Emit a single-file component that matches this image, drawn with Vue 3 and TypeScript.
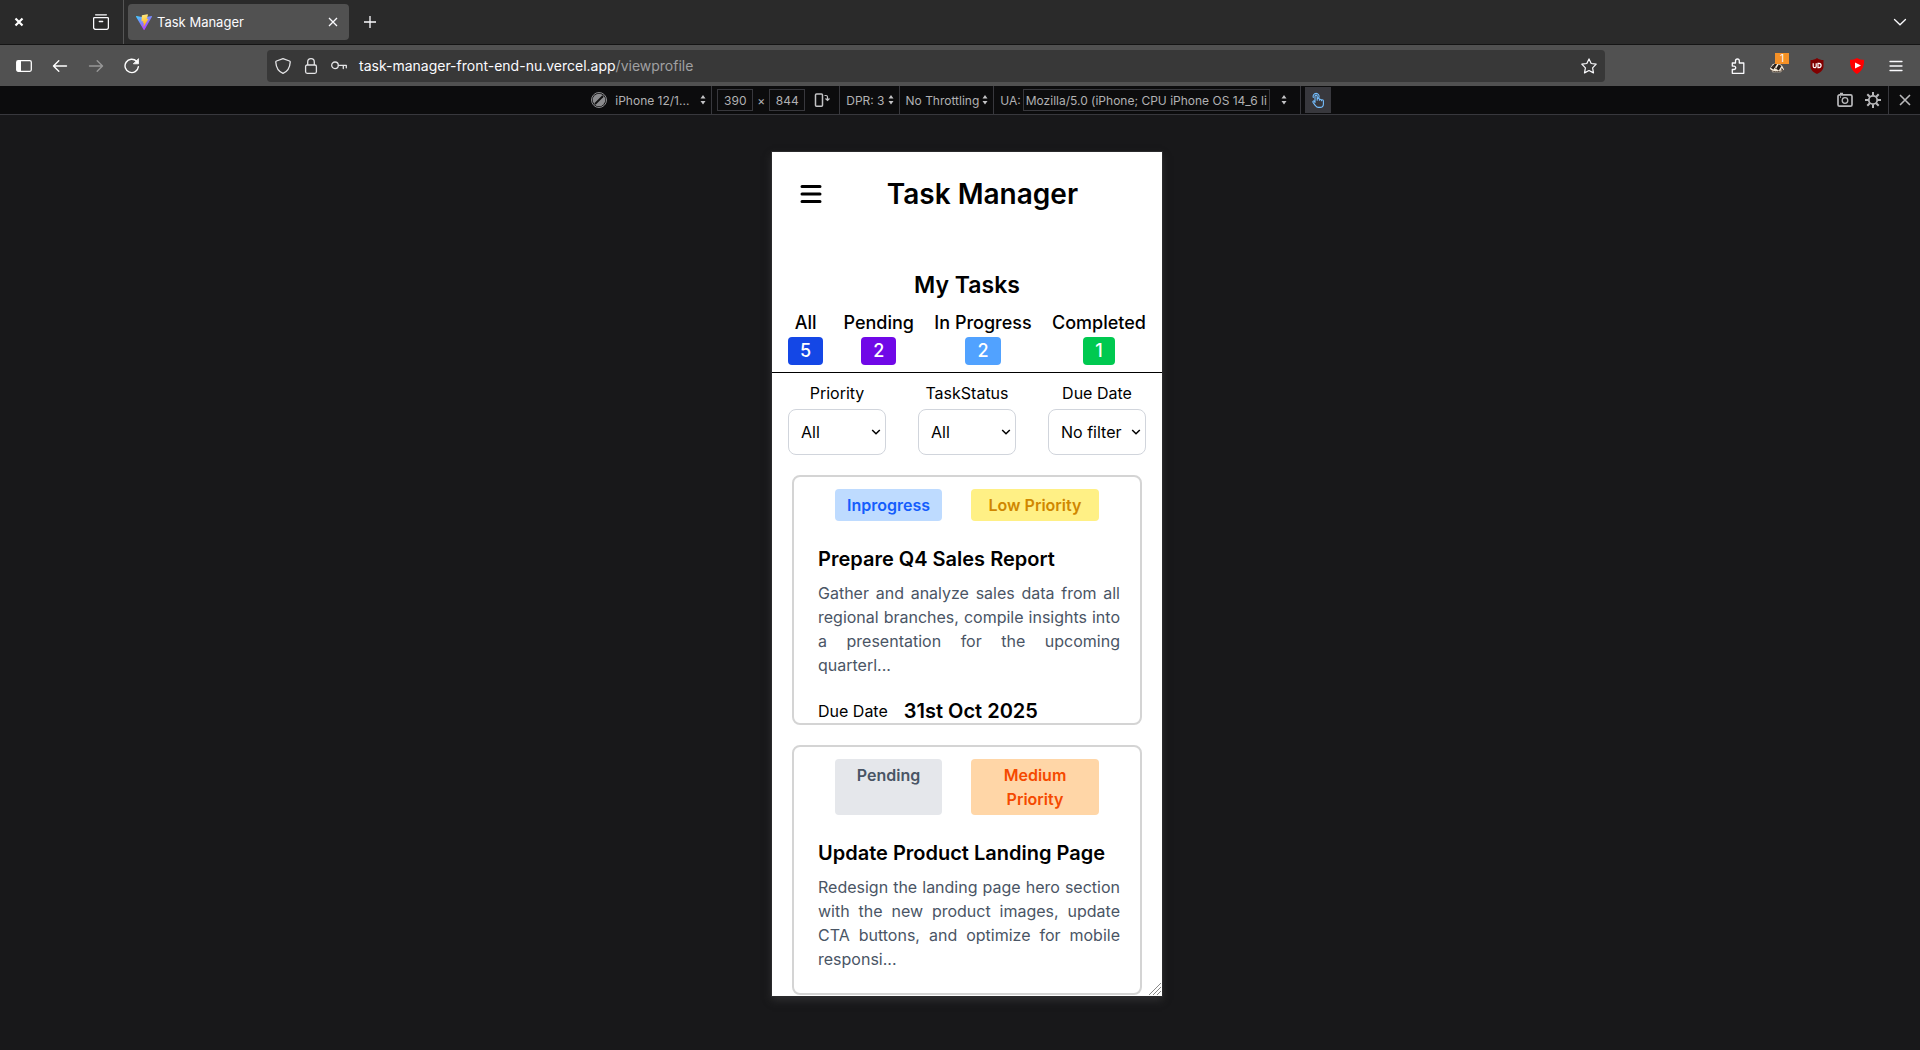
<script setup lang="ts">
interface Task {
  id: number
  status: string
  statusClass: string
  priority: string
  priorityClass: string
  title: string
  text: string
  due: string
}

interface Counter {
  label: string
  count: number
  tone: string
}

interface Filter {
  id: string
  label: string
  options: string[]
}

const counters: Counter[] = [
  { label: 'All', count: 5, tone: 'blue' },
  { label: 'Pending', count: 2, tone: 'violet' },
  { label: 'In Progress', count: 2, tone: 'sky' },
  { label: 'Completed', count: 1, tone: 'green' },
]

const filters: Filter[] = [
  { id: 'priority', label: 'Priority', options: ['All'] },
  { id: 'status', label: 'TaskStatus', options: ['All'] },
  { id: 'due', label: 'Due Date', options: ['No filter'] },
]

const tasks: Task[] = [
  {
    id: 1,
    status: 'Inprogress',
    statusClass: 'inprogress',
    priority: 'Low Priority',
    priorityClass: 'low',
    title: 'Prepare Q4 Sales Report',
    text: 'Gather and analyze sales data from all regional branches, compile insights into a presentation for the upcoming quarterl...',
    due: '31st Oct 2025',
  },
  {
    id: 2,
    status: 'Pending',
    statusClass: 'pending',
    priority: 'Medium Priority',
    priorityClass: 'medium',
    title: 'Update Product Landing Page',
    text: 'Redesign the landing page hero section with the new product images, update CTA buttons, and optimize for mobile responsi...',
    due: '',
  },
]
</script>

<template>
  <div class="browser">
    <header class="tabbar">
      <button class="icon win-close" aria-label="Close window">
        <svg width="10" height="10" viewBox="0 0 10 10"><path d="M1.500 1.500l7 7M8.500 1.500l-7 7" stroke="#fff" stroke-width="2.200" /></svg>
      </button>
      <button class="icon recent" aria-label="Recent browsing">
        <svg width="16" height="16" viewBox="0 0 16 16" fill="none" stroke="#fbfbfe" stroke-width="1.300" stroke-linecap="round" stroke-linejoin="round">
          <path d="M2.600.8h10.800M1.500 3.600h13a1 1 0 0 1 .9 1v8.800a2 2 0 0 1-2 2H2.600a2 2 0 0 1-2-2V4.600a1 1 0 0 1 .9-1zM6.300 7.500h3.400" />
        </svg>
      </button>
      <div class="tab">
        <svg width="16" height="16" viewBox="0 0 32 32">
          <defs>
            <linearGradient id="va" x1="0" y1="0" x2=".6" y2="1"><stop offset="0" stop-color="#41d1ff" /><stop offset="1" stop-color="#bd34fe" /></linearGradient>
            <linearGradient id="vb" x1=".4" y1="0" x2=".6" y2="1"><stop offset="0" stop-color="#ffea83" /><stop offset="1" stop-color="#ffa800" /></linearGradient>
          </defs>
          <path d="M31.900 5.700 17.100 31.500a1 1 0 0 1-1.800 0L.1 5.700a1 1 0 0 1 1.100-1.500l14.900 2.600 14.700-2.600a1 1 0 0 1 1.100 1.500z" fill="url(#va)" />
          <path d="m23 .5-11 2.100a.5.500 0 0 0-.3.400L11 14.400a.5.500 0 0 0 .6.500l3-.7-.9 4.500 2.400-.6-1.200 6.600c-.1.500.5.700.7.300L25 9.600l-3.500.5L24 1.500z" fill="url(#vb)" />
        </svg>
        <span class="tab-title">Task Manager</span>
        <button class="icon" aria-label="Close tab">
          <svg width="10" height="10" viewBox="0 0 10 10"><path d="M1 1l8 8M9 1l-8 8" stroke="#fbfbfe" stroke-width="1.300" /></svg>
        </button>
      </div>
      <button class="icon new-tab" aria-label="New tab">
        <svg width="14" height="14" viewBox="0 0 14 14"><path d="M7 1v12M1 7h12" stroke="#fbfbfe" stroke-width="1.300" /></svg>
      </button>
      <button class="icon all-tabs" aria-label="List all tabs">
        <svg width="14" height="14" viewBox="0 0 14 14" fill="none"><path d="M1.500 4.500 7 9.800l5.500-5.300" stroke="#fbfbfe" stroke-width="1.300" stroke-linecap="round" /></svg>
      </button>
    </header>

    <nav class="navbar">
      <div class="nav-buttons">
        <button class="icon" aria-label="Sidebar">
          <svg width="16" height="16" viewBox="0 0 16 16"><rect x=".7" y="2.700" width="14.600" height="10.600" rx="1.500" fill="none" stroke="#fff" stroke-width="1.300" /><path d="M1 3h4v10H1z" fill="#fff" /></svg>
        </button>
        <button class="icon" aria-label="Back">
          <svg width="16" height="16" viewBox="0 0 16 16" fill="none" stroke="#fff" stroke-width="1.400" stroke-linecap="round" stroke-linejoin="round"><path d="M14.500 8H1.600M6.800 2.800 1.500 8l5.300 5.200" /></svg>
        </button>
        <button class="icon faded" aria-label="Forward">
          <svg width="16" height="16" viewBox="0 0 16 16" fill="none" stroke="#fff" stroke-width="1.400" stroke-linecap="round" stroke-linejoin="round"><path d="M1.500 8h12.900M9.200 2.800 14.500 8l-5.300 5.200" /></svg>
        </button>
        <button class="icon" aria-label="Reload">
          <svg width="16" height="16" viewBox="0 0 16 16" fill="none" stroke="#fff" stroke-width="1.400" stroke-linecap="round"><path d="M14.400 8.700A6.700 6.700 0 1 1 12.600 3.300" /><path d="M14.500 1v4.800H9.700z" fill="#fff" stroke-width=".8" stroke-linejoin="round" /></svg>
        </button>
      </div>
      <div class="urlbar">
        <svg width="16" height="16" viewBox="0 0 16 16" fill="none" stroke="#e4e4e6" stroke-width="1.300" stroke-linejoin="round"><path d="M8 .7 14.500 3c.5.200.8.600.7 1.200-.3 5.300-2.600 9.200-7.200 11.200C3.400 13.400 1.100 9.500.8 4.200.7 3.600 1 3.200 1.500 3z" /></svg>
        <svg width="16" height="16" viewBox="0 0 16 16" fill="none" stroke="#e4e4e6" stroke-width="1.300"><rect x="2.600" y="7" width="10.800" height="8.300" rx="1.500" /><path d="M4.700 7V4a3.300 3.300 0 0 1 6.600 0v3" /></svg>
        <svg width="16" height="16" viewBox="0 0 16 16" fill="none" stroke="#e4e4e6" stroke-width="1.300" stroke-linecap="round" stroke-linejoin="round"><circle cx="4" cy="7.300" r="3.300" /><path d="M7.300 7.300h8v2.500M12.300 7.300v3.200" /></svg>
        <span class="url"><span class="host">task-manager-front-end-nu.vercel.app</span>/viewprofile</span>
        <button class="icon" aria-label="Bookmark this page">
          <svg width="16" height="16" viewBox="0 0 16 16" fill="none" stroke="#fbfbfe" stroke-width="1.200" stroke-linejoin="round"><path d="m8 .9 2.200 4.600 5 .7-3.600 3.600.9 5.100L8 12.500l-4.500 2.400.9-5.100L.8 6.200l5-.7z" /></svg>
        </button>
      </div>
      <div class="extensions">
        <button class="icon" aria-label="Extensions">
          <svg width="16" height="16" viewBox="-2 0 16 16" fill="none" stroke="#fbfbfe" stroke-width="1.300" stroke-linejoin="round"><path d="M1.300 15.300V11.500H3a1.700 1.700 0 0 0 0-3.400H1.300V5h3.200V2.900a1.900 1.900 0 0 1 3.800 0V5h4.500v10.300z" /></svg>
        </button>
        <button class="icon badger" aria-label="Privacy Badger">
          <svg width="16" height="16" viewBox="0 0 18 16"><path d="M1 11 4 6l6-2 5 4 2 4-4 3H4z" fill="#f4ead8" /><path d="m2 10 5-5 2 1-4 6zM8 11l3-5 3 2-3 5zM14 10l2 2-2 1z" fill="#251d18" /><path d="M1 12c3 3 9 3 15 1M4 8l4 3" stroke="#4b3b30" fill="none" /></svg>
          <span class="count">1</span>
        </button>
        <button class="icon" aria-label="uBlock Origin">
          <svg width="16" height="16" viewBox="0 0 16 16" fill="none"><path d="M8 0c2 1.500 4 2 6.500 2v6c0 4-2.500 6-6.500 8-4-2-6.500-4-6.500-8V2C4 2 6 1.500 8 0z" fill="#800000" /><path d="M4.200 5.300v2.900a1.500 1.500 0 0 0 3 0V5.300M9 5.400v4.200h1a2 2 0 0 0 0-4.200z" stroke="#fff" stroke-width="1.200" /></svg>
        </button>
        <button class="icon" aria-label="SponsorBlock">
          <svg width="16" height="16" viewBox="0 0 16 16"><path d="M8 0c2 1.300 4.500 1.800 7 1.800.3 6-1.500 11-7 14.200C2.500 12.800.7 7.800 1 1.800 3.500 1.800 6 1.300 8 0z" fill="#f00" /><path d="m6 4.500 6 3-6 3z" fill="#fff" /></svg>
        </button>
        <button class="icon" aria-label="Application menu">
          <svg width="14" height="14" viewBox="0 0 14 14"><path d="M1 2.500h12M1 7h12M1 11.500h12" stroke="#fbfbfe" stroke-width="1.300" stroke-linecap="round" /></svg>
        </button>
      </div>
    </nav>

    <section class="rdm" aria-label="Responsive design toolbar">
      <div class="side"></div>
      <div class="rdm-main">
        <button class="rdm-btn device">
          <svg width="16" height="16" viewBox="0 0 16 16"><circle cx="8" cy="8" r="7.500" fill="none" stroke="#8b8b8d" /><circle cx="8" cy="8" r="6.300" fill="#8b8b8d" /><path d="M4.500 11.500 11.500 4.500" stroke="#111" stroke-width="1.800" stroke-linecap="round" /></svg>
          <span class="device-name">iPhone 12/1...</span>
          <svg class="arrows" width="6" height="10" viewBox="0 0 6 10"><path d="m3 0 2.500 3.500h-5zM3 9.500.5 6h5z" /></svg>
        </button>
        <div class="group size">
          <input class="field num" aria-label="Width" value="390" />
          <span>×</span>
          <input class="field num" aria-label="Height" value="844" />
          <button class="icon rotate" aria-label="Rotate viewport">
            <svg width="16" height="16" viewBox="0 0 16 16" fill="none" stroke="#c4c4c6" stroke-width="1.500"><rect x="1.500" y="2" width="7" height="12.300" rx="1" /><path d="M10.500 3.500h1.500q1.500 0 1.500 1.500v3.200M11.500 6.500l2 2 2-2" stroke-width="1.200" /></svg>
          </button>
        </div>
        <button class="rdm-btn group dpr">DPR: 3
          <svg class="arrows" width="6" height="10" viewBox="0 0 6 10"><path d="m3 0 2.500 3.500h-5zM3 9.500.5 6h5z" /></svg>
        </button>
        <button class="rdm-btn group throttle">No Throttling
          <svg class="arrows" width="6" height="10" viewBox="0 0 6 10"><path d="m3 0 2.500 3.500h-5zM3 9.500.5 6h5z" /></svg>
        </button>
        <div class="group ua">
          <label for="ua">UA:</label>
          <input id="ua" class="field" value="Mozilla/5.0 (iPhone; CPU iPhone OS 14_6 like Mac OS X)" />
          <svg class="arrows" width="6" height="10" viewBox="0 0 6 10"><path d="m3 0 2.500 3.500h-5zM3 9.500.5 6h5z" /></svg>
        </div>
        <div class="group touch">
          <button class="icon" aria-label="Touch simulation">
            <svg width="16" height="16" viewBox="0 0 16 16" fill="none" stroke="#75bfff" stroke-width="1.100" stroke-linecap="round" stroke-linejoin="round"><path d="M5 10.500V4.200a1.100 1.100 0 0 1 2.200 0v4-1a1.100 1.100 0 0 1 2.200 0v1a1 1 0 0 1 2 0v.6a1 1 0 0 1 2 0V12c0 2-1.200 3.400-3.400 3.400H8.300c-1.300 0-2-.6-2.700-1.600L3 10.300c-.6-1 .7-1.800 1.400-1zM3.300 5.500a3 3 0 1 1 5.600 0" /></svg>
          </button>
        </div>
      </div>
      <div class="side right">
        <div class="tools">
          <button class="icon" aria-label="Take a screenshot">
            <svg width="16" height="16" viewBox="0 0 16 16" fill="none" stroke="#b8b8ba" stroke-width="1.700"><rect x="1" y="2.800" width="14" height="11.400" rx="1.500" /><circle cx="8" cy="8.500" r="2.800" stroke-width="1.300" /><path d="M3 1.600h3M3 5h1" /></svg>
          </button>
          <button class="icon" aria-label="Settings">
            <svg width="16" height="16" viewBox="0 0 16 16" fill="none" stroke="#b8b8ba"><circle cx="8" cy="8" r="4.200" stroke-width="1.800" /><path d="M8 0v3.500M8 12.500V16M0 8h3.500M12.500 8H16M2.300 2.300l2.500 2.500M11.200 11.200l2.500 2.500M13.700 2.300l-2.500 2.500M4.800 11.200l-2.500 2.500" stroke-width="2" /></svg>
          </button>
        </div>
        <div class="group close">
          <button class="icon" aria-label="Close responsive design mode">
            <svg width="12" height="12" viewBox="0 0 12 12"><path d="m1 1 10 10M11 1 1 11" stroke="#b8b8ba" stroke-width="1.600" /></svg>
          </button>
        </div>
      </div>
    </section>

    <div class="stage">
      <main class="screen">
        <header class="app-head">
          <button class="icon" aria-label="Menu">
            <svg width="24" height="24" viewBox="0 0 24 24"><path d="M3 4.500h18M3 12h18M3 19.500h18" stroke="#000" stroke-width="3" stroke-linecap="round" /></svg>
          </button>
          <h1>Task Manager</h1>
        </header>
        <h2>My Tasks</h2>
        <ul class="counters">
          <li v-for="c in counters" :key="c.label">
            {{ c.label }}
            <span class="pill" :class="c.tone">{{ c.count }}</span>
          </li>
        </ul>
        <div class="filters">
          <div v-for="f in filters" :key="f.id" class="filter">
            <label :for="f.id">{{ f.label }}</label>
            <div class="select-wrap">
              <select :id="f.id">
                <option v-for="o in f.options" :key="o">{{ o }}</option>
              </select>
              <svg width="10" height="6" viewBox="0 0 10 6" fill="none"><path d="m1.200 1 3.800 3.800L8.800 1" stroke="#000" stroke-width="1.500" /></svg>
            </div>
          </div>
        </div>
        <div class="cards">
          <article v-for="t in tasks" :key="t.id" class="card">
            <div class="tags">
              <span class="tag status" :class="t.statusClass">{{ t.status }}</span>
              <span class="tag priority" :class="t.priorityClass">{{ t.priority }}</span>
            </div>
            <h3>{{ t.title }}</h3>
            <p>{{ t.text }}</p>
            <div v-if="t.due" class="due">Due Date <strong>{{ t.due }}</strong></div>
          </article>
        </div>
        <svg class="grip" width="14" height="14" viewBox="0 0 14 14"><path d="M1 13 13 1M5 13l8-8M9 13l4-4" stroke="#8a8a8a" /></svg>
      </main>
    </div>
  </div>
</template>

<style>
body {
  margin: 0;
  background: #18181a;
}
</style>

<style scoped>
* {
  box-sizing: border-box;
}
.browser {
  min-height: 100vh;
  display: flex;
  flex-direction: column;
  background: #18181a;
  color: #fbfbfe;
  font-family: Inter, sans-serif;
  font-size: 14px;
}
button {
  font: inherit;
  color: inherit;
  background: none;
  border: 0;
  padding: 0;
}
svg {
  display: block;
  flex: none;
}
.icon {
  display: flex;
  align-items: center;
  justify-content: center;
  flex: none;
}
.tabbar {
  display: flex;
  align-items: center;
  height: 45px;
  background: #2a2a2a;
  border-bottom: 1px solid #151515;
}
.win-close {
  width: 38px;
}
.recent {
  width: 86px;
  height: 44px;
  padding: 0 14px 0 0;
  justify-content: flex-end;
  border-right: 1px solid #555;
}
.tab {
  display: flex;
  align-items: center;
  width: 221px;
  height: 36px;
  margin-left: 4px;
  padding: 0 11px 0 8px;
  gap: 5px;
  background: #515151;
  border-radius: 4px;
  font-size: 13px;
}
.tab-title {
  flex: 1;
}
.new-tab {
  width: 42px;
}
.all-tabs {
  margin-left: auto;
  margin-right: 13px;
}
.navbar {
  display: flex;
  align-items: center;
  height: 41px;
  background: #515151;
}
.nav-buttons {
  display: flex;
  gap: 20px;
  padding-left: 16px;
  width: 267px;
}
.faded {
  opacity: 0.4;
}
.urlbar {
  display: flex;
  align-items: center;
  flex: 1;
  height: 32px;
  padding: 0 8px;
  gap: 12px;
  background: #383838;
  border-radius: 4px;
}
.url {
  flex: 1;
  color: #a0a0a2;
}
.host {
  color: #fbfbfe;
}
.extensions {
  display: flex;
  justify-content: flex-end;
  gap: 24px;
  padding-right: 17px;
  width: 315px;
}
.badger {
  position: relative;
}
.count {
  position: absolute;
  top: -5px;
  right: -4px;
  width: 14px;
  height: 11px;
  font-size: 10px;
  line-height: 11px;
  background: #f59127;
}
.rdm {
  display: flex;
  height: 29px;
  background: #0c0c0d;
  border-bottom: 1px solid #38383d;
  color: #b1b1b3;
  font-size: 12px;
}
.side {
  flex: 1;
  display: flex;
}
.right {
  justify-content: flex-end;
}
.tools {
  display: flex;
  gap: 12px;
  padding-right: 7px;
}
.rdm-main {
  display: flex;
  margin-left: 6px;
}
.rdm-btn {
  display: flex;
  align-items: center;
}
.arrows {
  fill: #c4c4c6;
}
.device {
  gap: 8px;
  padding-right: 5px;
}
.device-name {
  width: 77px;
  text-align: left;
}
.group {
  display: flex;
  align-items: center;
  border-left: 1px solid #38383d;
}
.field {
  height: 22px;
  padding: 0 3px;
  font: inherit;
  color: inherit;
  background: none;
  border: 1px solid #38383d;
}
.num {
  width: 36px;
  text-align: center;
}
.size {
  gap: 4px;
  padding: 0 9px 0 5px;
}
.rotate {
  margin-left: 5px;
}
.dpr,
.throttle {
  gap: 3px;
  padding: 0 5px 0 6px;
}
.ua {
  gap: 2px;
  padding: 0 13px 0 6px;
}
.ua .field {
  width: 247px;
  padding: 0 2px;
  margin-right: 9px;
}
.touch {
  padding: 0 4px;
}
.touch .icon {
  width: 26px;
  height: 26px;
  background: #38383d;
}
.close {
  padding: 0 9px 0 10px;
}
.stage {
  flex: 1;
  display: flex;
  justify-content: center;
  align-items: flex-start;
  padding: 37px 0 54px 14px;
}
.screen {
  position: relative;
  width: 390px;
  aspect-ratio: 390 / 844;
  overflow: hidden;
  background: #fff;
  color: #000;
  font-size: 16px;
  line-height: 24px;
  box-shadow: 0 0 0 1px #2a2a2c, 0 4px 8px #303032;
}
.app-head {
  display: flex;
  align-items: center;
  height: 84px;
  padding: 0 84px 0 27px;
  justify-content: space-between;
}
h1,
h2,
h3,
p,
ul {
  margin: 0;
  padding: 0;
}
h1 {
  font-size: 28px;
  font-weight: 600;
  line-height: 36px;
}
h2 {
  margin-top: 33px;
  font-size: 23px;
  font-weight: 600;
  line-height: 32px;
  text-align: center;
}
.counters {
  display: flex;
  justify-content: space-between;
  margin-top: 8px;
  padding: 0 16px 7px;
  border-bottom: 1px solid #000;
  list-style: none;
  font-size: 18px;
  font-weight: 500;
  line-height: 28px;
}
.counters li {
  display: flex;
  flex-direction: column;
  align-items: center;
}
.pill {
  padding: 0 12px;
  border-radius: 4px;
  color: #fff;
}
.blue {
  background: #1447e6;
}
.violet {
  background: #7008e7;
}
.sky {
  background: #51a2ff;
}
.green {
  background: #00c950;
}
.filters {
  display: flex;
  justify-content: space-between;
  padding: 8px 16px 20px;
}
.filter {
  width: 98px;
  text-align: center;
}
.filter label {
  display: block;
  margin-bottom: 4px;
}
.select-wrap {
  position: relative;
}
.select-wrap svg {
  position: absolute;
  right: 5px;
  top: 20px;
  pointer-events: none;
}
select {
  display: block;
  appearance: none;
  width: 100%;
  height: 46px;
  padding: 0 12px;
  border: 1px solid #d1d5dc;
  border-radius: 8px;
  background: #fff;
  color: #000;
  font: inherit;
}
.cards {
  display: flex;
  flex-direction: column;
  gap: 20px;
  padding: 0 20px;
}
.card {
  height: 250px;
  padding: 12px 20px 12px 24px;
  overflow: hidden;
  border: 2px solid #d4d4d4;
  border-radius: 8px;
}
.tags {
  display: flex;
  gap: 29px;
  padding: 0 17px;
}
.tag {
  flex: none;
  padding: 4px 12px;
  border-radius: 4px;
  font-weight: 600;
  text-align: center;
}
.status {
  width: 107px;
}
.priority {
  width: 128px;
}
.inprogress {
  background: #bedbff;
  color: #155dfc;
}
.low {
  background: #fff085;
  color: #d08700;
}
.pending {
  background: #e5e7eb;
  color: #4a5565;
}
.medium {
  background: #ffd6a7;
  color: #f54900;
}
h3 {
  margin: 24px 0 8px;
  font-size: 20px;
  font-weight: 600;
  line-height: 28px;
}
.card p {
  color: #4a5565;
  text-align: justify;
}
.due {
  display: flex;
  align-items: center;
  gap: 16px;
  margin-top: 20px;
}
.due strong {
  font-size: 20px;
  font-weight: 600;
  line-height: 28px;
}
.grip {
  position: absolute;
  right: 0;
  bottom: 0;
}
</style>
